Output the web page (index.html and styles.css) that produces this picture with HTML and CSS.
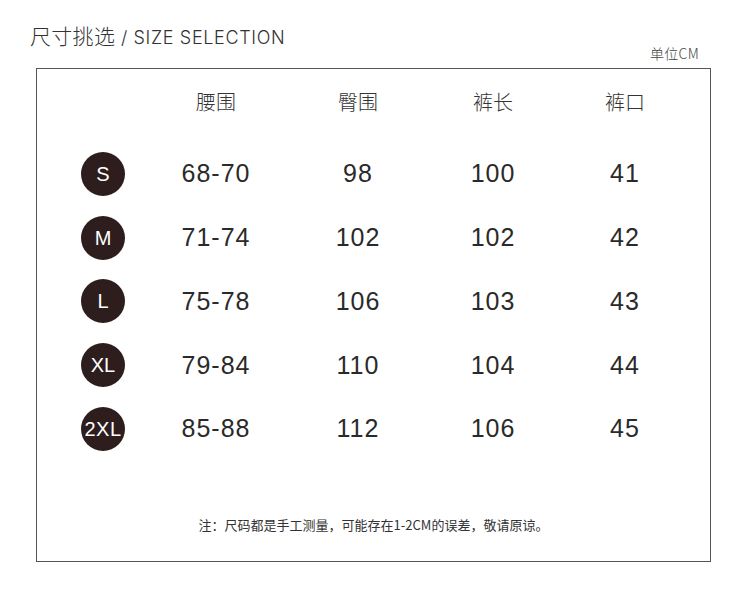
FILE: index.html
```html
<!DOCTYPE html>
<html lang="zh">
<head>
<meta charset="utf-8">
<link rel="stylesheet" href="styles.css">
</head>
<body>
<div class="page">
  <div class="head">
    <h1 class="title"><span class="cn">尺寸挑选</span> / SIZE SELECTION</h1>
    <div class="unit">单位CM</div>
  </div>
  <div class="box">
    <div class="grid">
      <div class="hcell"></div>
      <div class="hcell">腰围</div>
      <div class="hcell">臀围</div>
      <div class="hcell">裤长</div>
      <div class="hcell">裤口</div>

      <div class="cell"><span class="badge">S</span></div>
      <div class="cell num">68-70</div>
      <div class="cell num">98</div>
      <div class="cell num">100</div>
      <div class="cell num">41</div>

      <div class="cell"><span class="badge">M</span></div>
      <div class="cell num">71-74</div>
      <div class="cell num">102</div>
      <div class="cell num">102</div>
      <div class="cell num">42</div>

      <div class="cell"><span class="badge">L</span></div>
      <div class="cell num">75-78</div>
      <div class="cell num">106</div>
      <div class="cell num">103</div>
      <div class="cell num">43</div>

      <div class="cell"><span class="badge">XL</span></div>
      <div class="cell num">79-84</div>
      <div class="cell num">110</div>
      <div class="cell num">104</div>
      <div class="cell num">44</div>

      <div class="cell"><span class="badge small">2XL</span></div>
      <div class="cell num">85-88</div>
      <div class="cell num">112</div>
      <div class="cell num">106</div>
      <div class="cell num">45</div>
    </div>
    <p class="note">注：尺码都是手工测量，可能存在1-2CM的误差，敬请原谅。</p>
  </div>
</div>
</body>
</html>
```

FILE: styles.css
```css
* { box-sizing: border-box; }
html, body { margin: 0; padding: 0; background: #fff; }
body {
  width: 750px;
  height: 616px;
  font-family: "Liberation Sans", "Noto Sans CJK SC", sans-serif;
  color: #222;
}
.page { padding: 0 0 0 36px; }
.head {
  height: 68px;
  position: relative;
}
.title {
  margin: 0;
  padding-top: 24px;
  margin-left: -6px;
  font-family: "Inter", "Noto Sans CJK SC", sans-serif;
  font-weight: 300;
  font-size: 18px;
  line-height: 22px;
  letter-spacing: 0.65px;
  color: #333;
}
.title .cn {
  font-family: "Noto Sans CJK SC", sans-serif;
  font-weight: 300;
  font-size: 21px;
  letter-spacing: 0.3px;
}
.unit {
  position: absolute;
  right: 51px;
  top: 44px;
  font-family: "Noto Sans CJK SC", sans-serif;
  font-weight: 300;
  font-size: 14px;
  line-height: 18px;
  color: #444;
  letter-spacing: 0.3px;
}
.box {
  width: 675px;
  height: 494px;
  border: 1px solid #555;
}
.grid {
  display: grid;
  grid-template-columns: 132px 94px 190px 80px 184px;
  grid-template-rows: 73px;
  grid-auto-rows: 63.75px;
}
.hcell {
  padding-bottom: 9px;
  display: flex;
  align-items: center;
  justify-content: center;
  font-family: "Noto Sans CJK SC", sans-serif;
  font-weight: 300;
  font-size: 20px;
  color: #333;
  white-space: nowrap;
}
.cell {
  display: flex;
  align-items: center;
  justify-content: center;
  white-space: nowrap;
}
.num {
  font-size: 25px;
  letter-spacing: 1px;
  color: #2a2a2a;
}
.badge {
  width: 44px;
  height: 44px;
  border-radius: 50%;
  background: #2d1d1d;
  color: #fff;
  display: flex;
  align-items: center;
  justify-content: center;
  font-size: 20px;
  line-height: 1;
}
.badge.small { font-size: 20px; letter-spacing: 0.5px; }
.note {
  margin: 54px 0 0;
  text-align: center;
  font-family: "Noto Sans CJK SC", sans-serif;
  font-weight: 400;
  font-size: 13px;
  line-height: 20px;
  color: #333;
  letter-spacing: 0;
}
```
